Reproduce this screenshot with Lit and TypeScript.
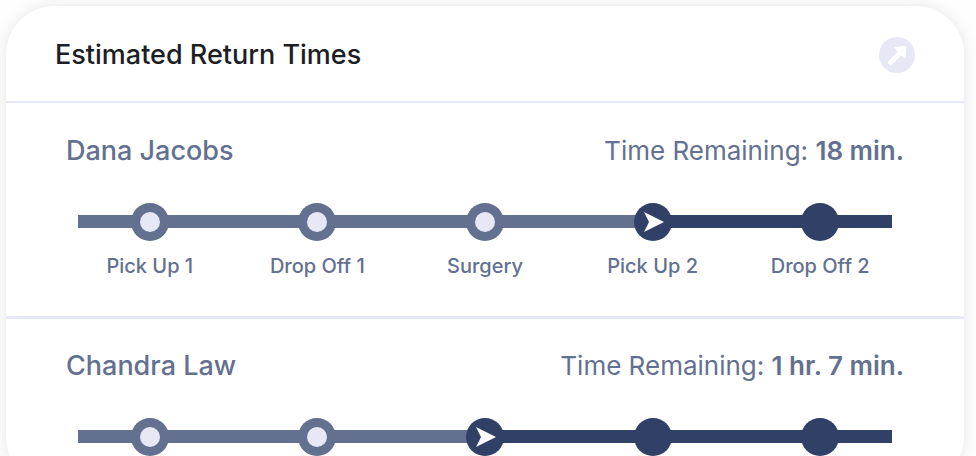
import { LitElement, html, svg, css, nothing } from "lit";
import { customElement, property } from "lit/decorators.js";
import { classMap } from "lit/directives/class-map.js";
import { styleMap } from "lit/directives/style-map.js";

interface Stop {
  label?: string;
}

interface Trip {
  name: string;
  remaining: string;
  stops: Stop[];
  current: number;
}

const trips: Trip[] = [
  {
    name: "Dana Jacobs",
    remaining: "18 min.",
    stops: [
      { label: "Pick Up 1" },
      { label: "Drop Off 1" },
      { label: "Surgery" },
      { label: "Pick Up 2" },
      { label: "Drop Off 2" },
    ],
    current: 3,
  },
  {
    name: "Chandra Law",
    remaining: "1 hr. 7 min.",
    stops: [{}, {}, {}, {}, {}],
    current: 2,
  },
];

@customElement("trip-progress")
export class TripProgress extends LitElement {
  @property({ attribute: false }) stops: Stop[] = [];
  @property({ type: Number }) current = 0;

  static styles = css`
    :host {
      display: block;
      position: relative;
    }
    .track {
      position: absolute;
      top: 12px;
      left: 12px;
      right: 12px;
      height: 13px;
      background: #304067;
    }
    .done {
      height: 100%;
      background: #63708f;
    }
    .stops {
      position: relative;
      display: grid;
      grid-auto-flow: column;
      grid-auto-columns: 1fr;
      margin: 0;
      padding: 0;
      list-style: none;
    }
    .stop {
      display: flex;
      flex-direction: column;
      align-items: center;
      gap: 12px;
      font-size: 20px;
      line-height: 26px;
      font-weight: 500;
      color: #63708f;
      white-space: nowrap;
    }
    .dot {
      display: block;
      width: 38px;
      height: 38px;
      fill: #304067;
    }
    .past .dot {
      fill: #63708f;
    }
    .past .hole {
      fill: #e6e9f5;
    }
    .arrow {
      fill: #ffffff;
    }
  `;

  render() {
    const share = ((this.current + 0.5) / this.stops.length) * 100;
    return html`
      <div class="track"><div class="done" style=${styleMap({ width: `${share}%` })}></div></div>
      <ol class="stops">
        ${this.stops.map(
          (stop, i) => html`
            <li class=${classMap({ stop: true, past: i < this.current })}>
              <svg class="dot" viewBox="0 0 38 38" aria-hidden="true">
                <circle cx="19" cy="19" r="19"></circle>
                ${i < this.current ? svg`<circle class="hole" cx="19" cy="19" r="10"></circle>` : nothing}
                ${i === this.current
                  ? svg`<path class="arrow" d="M10 9 L30 19 L10 29 L15 19 Z"></path>`
                  : nothing}
              </svg>
              ${stop.label ? html`<span>${stop.label}</span>` : nothing}
            </li>
          `
        )}
      </ol>
    `;
  }
}

@customElement("app-root")
export class AppRoot extends LitElement {
  static styles = css`
    :host {
      display: block;
      box-sizing: border-box;
      height: 100vh;
      overflow: hidden;
      padding: 6px 12px 0 6px;
      background: #fefefe;
      font-family: Inter, "Liberation Sans", sans-serif;
      color: #63708f;
    }
    .card {
      aspect-ratio: 2 / 1;
      overflow: hidden;
      border-radius: 48px;
      background: #ffffff;
      box-shadow: 0 0 16px rgba(0, 0, 0, 0.1);
    }
    .head {
      display: flex;
      align-items: center;
      justify-content: space-between;
      padding: 30px 49px 27px;
    }
    .title {
      margin: 0;
      font-size: 27px;
      line-height: 38px;
      font-weight: 500;
      color: #1b1e24;
    }
    .open {
      display: block;
      width: 36px;
      height: 36px;
      padding: 0;
      border: 0;
      border-radius: 50%;
      background: #e6e9f5;
      cursor: pointer;
    }
    .open svg {
      display: block;
    }
    .trip {
      border-top: 2px solid #e6e9f5;
      padding: 30px 60px 37px;
    }
    .trip + .trip {
      border-top-width: 3px;
      padding-top: 29px;
    }
    .summary {
      display: flex;
      align-items: baseline;
      justify-content: space-between;
      margin-bottom: 34px;
      font-size: 26px;
      line-height: 36px;
    }
    .name {
      margin: 0;
      font-size: 27px;
      font-weight: 500;
    }
    .remaining {
      margin: 0;
      font-weight: 400;
    }
    .time {
      font-weight: 600;
    }
  `;

  render() {
    return html`
      <main class="card">
        <header class="head">
          <h1 class="title">Estimated Return Times</h1>
          <button class="open" type="button" aria-label="Open return times">
            <svg width="36" height="36" viewBox="0 0 36 36" aria-hidden="true">
              <path d="M11.5 25.5 L22 15" stroke="#fff" stroke-width="5" stroke-linecap="round"></path>
              <path d="M16.5 11 L26.5 10 L25.5 20 Z" fill="#fff" stroke="#fff" stroke-width="2" stroke-linejoin="round"></path>
            </svg>
          </button>
        </header>
        ${trips.map(
          (trip) => html`
            <section class="trip">
              <div class="summary">
                <h2 class="name">${trip.name}</h2>
                <p class="remaining">Time Remaining: <strong class="time">${trip.remaining}</strong></p>
              </div>
              <trip-progress .stops=${trip.stops} .current=${trip.current}></trip-progress>
            </section>
          `
        )}
      </main>
    `;
  }
}
